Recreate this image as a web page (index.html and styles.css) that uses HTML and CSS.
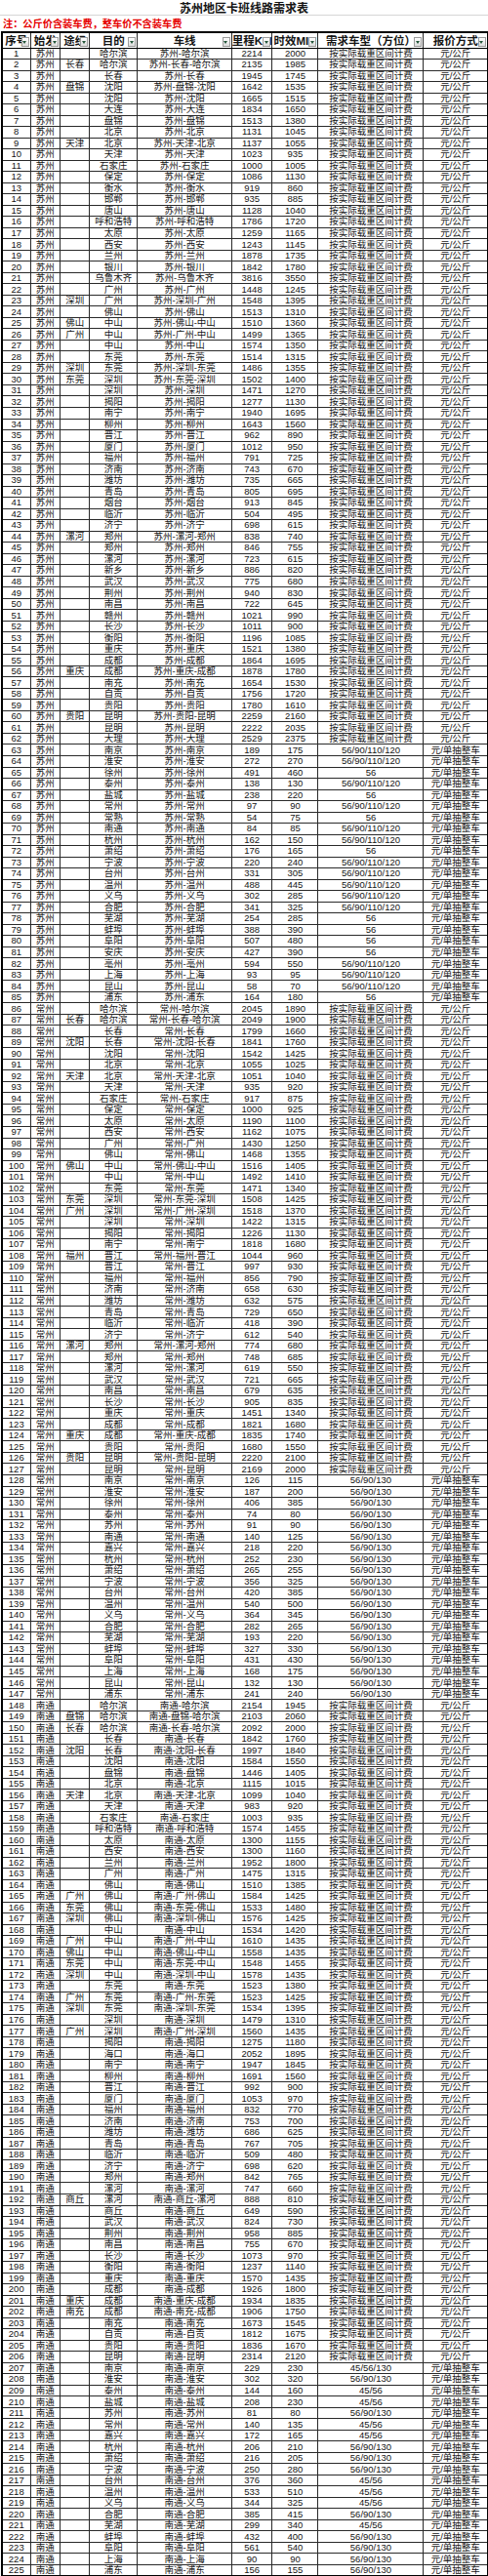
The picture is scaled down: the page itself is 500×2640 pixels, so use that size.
FILE: index.html
```html
<!DOCTYPE html>
<html lang="zh-CN">
<head>
<meta charset="utf-8">
<title>苏州地区卡班线路需求表</title>
<link rel="stylesheet" href="styles.css">
</head>
<body>
<div class="title">苏州地区卡班线路需求表</div>
<div class="note">注：公斤价含装车费，整车价不含装车费</div>
<table class="sheet">
<colgroup><col class="c1"><col class="c2"><col class="c3"><col class="c4"><col class="c5"><col class="c6"><col class="c7"><col class="c8"><col class="c9"></colgroup>
<thead>
<tr><th>序号<span class="fb"></span></th><th>始发<span class="fb"></span></th><th>途经<span class="fb"></span></th><th>目的<span class="fb"></span></th><th>车线<span class="fb"></span></th><th>里程KM<span class="fb"></span></th><th>时效MIN<span class="fb"></span></th><th>需求车型（方位）<span class="fb"></span></th><th>报价方式<span class="fb"></span></th></tr>
</thead>
<tbody>
<tr><td>1<td>苏州<td><td>哈尔滨<td>苏州-哈尔滨<td>2214<td>2000<td>按实际载重区间计费<td>元/公斤
<tr><td>2<td>苏州<td>长春<td>哈尔滨<td>苏州-长春-哈尔滨<td>2135<td>1985<td>按实际载重区间计费<td>元/公斤
<tr><td>3<td>苏州<td><td>长春<td>苏州-长春<td>1945<td>1745<td>按实际载重区间计费<td>元/公斤
<tr><td>4<td>苏州<td>盘锦<td>沈阳<td>苏州-盘锦-沈阳<td>1642<td>1535<td>按实际载重区间计费<td>元/公斤
<tr><td>5<td>苏州<td><td>沈阳<td>苏州-沈阳<td>1665<td>1515<td>按实际载重区间计费<td>元/公斤
<tr><td>6<td>苏州<td><td>大连<td>苏州-大连<td>1834<td>1650<td>按实际载重区间计费<td>元/公斤
<tr><td>7<td>苏州<td><td>盘锦<td>苏州-盘锦<td>1513<td>1380<td>按实际载重区间计费<td>元/公斤
<tr><td>8<td>苏州<td><td>北京<td>苏州-北京<td>1131<td>1045<td>按实际载重区间计费<td>元/公斤
<tr><td>9<td>苏州<td>天津<td>北京<td>苏州-天津-北京<td>1137<td>1055<td>按实际载重区间计费<td>元/公斤
<tr><td>10<td>苏州<td><td>天津<td>苏州-天津<td>1023<td>935<td>按实际载重区间计费<td>元/公斤
<tr><td>11<td>苏州<td><td>石家庄<td>苏州-石家庄<td>1000<td>1005<td>按实际载重区间计费<td>元/公斤
<tr><td>12<td>苏州<td><td>保定<td>苏州-保定<td>1086<td>1130<td>按实际载重区间计费<td>元/公斤
<tr><td>13<td>苏州<td><td>衡水<td>苏州-衡水<td>919<td>860<td>按实际载重区间计费<td>元/公斤
<tr><td>14<td>苏州<td><td>邯郸<td>苏州-邯郸<td>935<td>885<td>按实际载重区间计费<td>元/公斤
<tr><td>15<td>苏州<td><td>唐山<td>苏州-唐山<td>1128<td>1040<td>按实际载重区间计费<td>元/公斤
<tr><td>16<td>苏州<td><td>呼和浩特<td>苏州-呼和浩特<td>1786<td>1720<td>按实际载重区间计费<td>元/公斤
<tr><td>17<td>苏州<td><td>太原<td>苏州-太原<td>1259<td>1165<td>按实际载重区间计费<td>元/公斤
<tr><td>18<td>苏州<td><td>西安<td>苏州-西安<td>1243<td>1145<td>按实际载重区间计费<td>元/公斤
<tr><td>19<td>苏州<td><td>兰州<td>苏州-兰州<td>1878<td>1735<td>按实际载重区间计费<td>元/公斤
<tr><td>20<td>苏州<td><td>银川<td>苏州-银川<td>1842<td>1780<td>按实际载重区间计费<td>元/公斤
<tr><td>21<td>苏州<td><td>乌鲁木齐<td>苏州-乌鲁木齐<td>3816<td>3550<td>按实际载重区间计费<td>元/公斤
<tr><td>22<td>苏州<td><td>广州<td>苏州-广州<td>1448<td>1245<td>按实际载重区间计费<td>元/公斤
<tr><td>23<td>苏州<td>深圳<td>广州<td>苏州-深圳-广州<td>1548<td>1395<td>按实际载重区间计费<td>元/公斤
<tr><td>24<td>苏州<td><td>佛山<td>苏州-佛山<td>1513<td>1310<td>按实际载重区间计费<td>元/公斤
<tr><td>25<td>苏州<td>佛山<td>中山<td>苏州-佛山-中山<td>1510<td>1360<td>按实际载重区间计费<td>元/公斤
<tr><td>26<td>苏州<td>广州<td>中山<td>苏州-广州-中山<td>1499<td>1365<td>按实际载重区间计费<td>元/公斤
<tr><td>27<td>苏州<td><td>中山<td>苏州-中山<td>1574<td>1350<td>按实际载重区间计费<td>元/公斤
<tr><td>28<td>苏州<td><td>东莞<td>苏州-东莞<td>1514<td>1315<td>按实际载重区间计费<td>元/公斤
<tr><td>29<td>苏州<td>深圳<td>东莞<td>苏州-深圳-东莞<td>1486<td>1355<td>按实际载重区间计费<td>元/公斤
<tr><td>30<td>苏州<td>东莞<td>深圳<td>苏州-东莞-深圳<td>1502<td>1400<td>按实际载重区间计费<td>元/公斤
<tr><td>31<td>苏州<td><td>深圳<td>苏州-深圳<td>1471<td>1270<td>按实际载重区间计费<td>元/公斤
<tr><td>32<td>苏州<td><td>揭阳<td>苏州-揭阳<td>1277<td>1130<td>按实际载重区间计费<td>元/公斤
<tr><td>33<td>苏州<td><td>南宁<td>苏州-南宁<td>1940<td>1695<td>按实际载重区间计费<td>元/公斤
<tr><td>34<td>苏州<td><td>柳州<td>苏州-柳州<td>1643<td>1560<td>按实际载重区间计费<td>元/公斤
<tr><td>35<td>苏州<td><td>晋江<td>苏州-晋江<td>962<td>890<td>按实际载重区间计费<td>元/公斤
<tr><td>36<td>苏州<td><td>厦门<td>苏州-厦门<td>1012<td>950<td>按实际载重区间计费<td>元/公斤
<tr><td>37<td>苏州<td><td>福州<td>苏州-福州<td>791<td>725<td>按实际载重区间计费<td>元/公斤
<tr><td>38<td>苏州<td><td>济南<td>苏州-济南<td>743<td>670<td>按实际载重区间计费<td>元/公斤
<tr><td>39<td>苏州<td><td>潍坊<td>苏州-潍坊<td>735<td>665<td>按实际载重区间计费<td>元/公斤
<tr><td>40<td>苏州<td><td>青岛<td>苏州-青岛<td>805<td>695<td>按实际载重区间计费<td>元/公斤
<tr><td>41<td>苏州<td><td>烟台<td>苏州-烟台<td>913<td>845<td>按实际载重区间计费<td>元/公斤
<tr><td>42<td>苏州<td><td>临沂<td>苏州-临沂<td>504<td>495<td>按实际载重区间计费<td>元/公斤
<tr><td>43<td>苏州<td><td>济宁<td>苏州-济宁<td>698<td>615<td>按实际载重区间计费<td>元/公斤
<tr><td>44<td>苏州<td>漯河<td>郑州<td>苏州-漯河-郑州<td>838<td>740<td>按实际载重区间计费<td>元/公斤
<tr><td>45<td>苏州<td><td>郑州<td>苏州-郑州<td>846<td>755<td>按实际载重区间计费<td>元/公斤
<tr><td>46<td>苏州<td><td>漯河<td>苏州-漯河<td>723<td>615<td>按实际载重区间计费<td>元/公斤
<tr><td>47<td>苏州<td><td>新乡<td>苏州-新乡<td>886<td>820<td>按实际载重区间计费<td>元/公斤
<tr><td>48<td>苏州<td><td>武汉<td>苏州-武汉<td>775<td>680<td>按实际载重区间计费<td>元/公斤
<tr><td>49<td>苏州<td><td>荆州<td>苏州-荆州<td>940<td>830<td>按实际载重区间计费<td>元/公斤
<tr><td>50<td>苏州<td><td>南昌<td>苏州-南昌<td>722<td>645<td>按实际载重区间计费<td>元/公斤
<tr><td>51<td>苏州<td><td>赣州<td>苏州-赣州<td>1021<td>990<td>按实际载重区间计费<td>元/公斤
<tr><td>52<td>苏州<td><td>长沙<td>苏州-长沙<td>1011<td>900<td>按实际载重区间计费<td>元/公斤
<tr><td>53<td>苏州<td><td>衡阳<td>苏州-衡阳<td>1196<td>1085<td>按实际载重区间计费<td>元/公斤
<tr><td>54<td>苏州<td><td>重庆<td>苏州-重庆<td>1521<td>1380<td>按实际载重区间计费<td>元/公斤
<tr><td>55<td>苏州<td><td>成都<td>苏州-成都<td>1864<td>1695<td>按实际载重区间计费<td>元/公斤
<tr><td>56<td>苏州<td>重庆<td>成都<td>苏州-重庆-成都<td>1878<td>1780<td>按实际载重区间计费<td>元/公斤
<tr><td>57<td>苏州<td><td>南充<td>苏州-南充<td>1654<td>1530<td>按实际载重区间计费<td>元/公斤
<tr><td>58<td>苏州<td><td>自贡<td>苏州-自贡<td>1756<td>1720<td>按实际载重区间计费<td>元/公斤
<tr><td>59<td>苏州<td><td>贵阳<td>苏州-贵阳<td>1780<td>1610<td>按实际载重区间计费<td>元/公斤
<tr><td>60<td>苏州<td>贵阳<td>昆明<td>苏州-贵阳-昆明<td>2259<td>2160<td>按实际载重区间计费<td>元/公斤
<tr><td>61<td>苏州<td><td>昆明<td>苏州-昆明<td>2222<td>2035<td>按实际载重区间计费<td>元/公斤
<tr><td>62<td>苏州<td><td>大理<td>苏州-大理<td>2529<td>2375<td>按实际载重区间计费<td>元/公斤
<tr><td>63<td>苏州<td><td>南京<td>苏州-南京<td>189<td>175<td>56/90/110/120<td>元/单抽整车
<tr><td>64<td>苏州<td><td>淮安<td>苏州-淮安<td>272<td>270<td>56/90/110/120<td>元/单抽整车
<tr><td>65<td>苏州<td><td>徐州<td>苏州-徐州<td>491<td>460<td>56<td>元/单抽整车
<tr><td>66<td>苏州<td><td>泰州<td>苏州-泰州<td>138<td>130<td>56/90/110/120<td>元/单抽整车
<tr><td>67<td>苏州<td><td>盐城<td>苏州-盐城<td>238<td>220<td>56<td>元/单抽整车
<tr><td>68<td>苏州<td><td>常州<td>苏州-常州<td>97<td>90<td>56/90/110/120<td>元/单抽整车
<tr><td>69<td>苏州<td><td>常熟<td>苏州-常熟<td>54<td>75<td>56<td>元/单抽整车
<tr><td>70<td>苏州<td><td>南通<td>苏州-南通<td>84<td>85<td>56/90/110/120<td>元/单抽整车
<tr><td>71<td>苏州<td><td>杭州<td>苏州-杭州<td>162<td>150<td>56/90/110/120<td>元/单抽整车
<tr><td>72<td>苏州<td><td>萧绍<td>苏州-萧绍<td>176<td>165<td>56<td>元/单抽整车
<tr><td>73<td>苏州<td><td>宁波<td>苏州-宁波<td>220<td>240<td>56/90/110/120<td>元/单抽整车
<tr><td>74<td>苏州<td><td>台州<td>苏州-台州<td>331<td>305<td>56/90/110/120<td>元/单抽整车
<tr><td>75<td>苏州<td><td>温州<td>苏州-温州<td>488<td>445<td>56/90/110/120<td>元/单抽整车
<tr><td>76<td>苏州<td><td>义乌<td>苏州-义乌<td>302<td>285<td>56/90/110/120<td>元/单抽整车
<tr><td>77<td>苏州<td><td>合肥<td>苏州-合肥<td>341<td>325<td>56/90/110/120<td>元/单抽整车
<tr><td>78<td>苏州<td><td>芜湖<td>苏州-芜湖<td>254<td>285<td>56<td>元/单抽整车
<tr><td>79<td>苏州<td><td>蚌埠<td>苏州-蚌埠<td>388<td>390<td>56<td>元/单抽整车
<tr><td>80<td>苏州<td><td>阜阳<td>苏州-阜阳<td>507<td>480<td>56<td>元/单抽整车
<tr><td>81<td>苏州<td><td>安庆<td>苏州-安庆<td>427<td>390<td>56<td>元/单抽整车
<tr><td>82<td>苏州<td><td>亳州<td>苏州-亳州<td>594<td>550<td>56/90/110/120<td>元/单抽整车
<tr><td>83<td>苏州<td><td>上海<td>苏州-上海<td>93<td>95<td>56/90/110/120<td>元/单抽整车
<tr><td>84<td>苏州<td><td>昆山<td>苏州-昆山<td>58<td>70<td>56/90/110/120<td>元/单抽整车
<tr><td>85<td>苏州<td><td>浦东<td>苏州-浦东<td>164<td>180<td>56<td>元/单抽整车
<tr><td>86<td>常州<td><td>哈尔滨<td>常州-哈尔滨<td>2045<td>1890<td>按实际载重区间计费<td>元/公斤
<tr><td>87<td>常州<td>长春<td>哈尔滨<td>常州-长春-哈尔滨<td>2049<td>1900<td>按实际载重区间计费<td>元/公斤
<tr><td>88<td>常州<td><td>长春<td>常州-长春<td>1799<td>1660<td>按实际载重区间计费<td>元/公斤
<tr><td>89<td>常州<td>沈阳<td>长春<td>常州-沈阳-长春<td>1841<td>1760<td>按实际载重区间计费<td>元/公斤
<tr><td>90<td>常州<td><td>沈阳<td>常州-沈阳<td>1542<td>1425<td>按实际载重区间计费<td>元/公斤
<tr><td>91<td>常州<td><td>北京<td>常州-北京<td>1055<td>1025<td>按实际载重区间计费<td>元/公斤
<tr><td>92<td>常州<td>天津<td>北京<td>常州-天津-北京<td>1051<td>1040<td>按实际载重区间计费<td>元/公斤
<tr><td>93<td>常州<td><td>天津<td>常州-天津<td>935<td>920<td>按实际载重区间计费<td>元/公斤
<tr><td>94<td>常州<td><td>石家庄<td>常州-石家庄<td>917<td>875<td>按实际载重区间计费<td>元/公斤
<tr><td>95<td>常州<td><td>保定<td>常州-保定<td>1000<td>925<td>按实际载重区间计费<td>元/公斤
<tr><td>96<td>常州<td><td>太原<td>常州-太原<td>1190<td>1100<td>按实际载重区间计费<td>元/公斤
<tr><td>97<td>常州<td><td>西安<td>常州-西安<td>1162<td>1075<td>按实际载重区间计费<td>元/公斤
<tr><td>98<td>常州<td><td>广州<td>常州-广州<td>1430<td>1250<td>按实际载重区间计费<td>元/公斤
<tr><td>99<td>常州<td><td>佛山<td>常州-佛山<td>1468<td>1355<td>按实际载重区间计费<td>元/公斤
<tr><td>100<td>常州<td>佛山<td>中山<td>常州-佛山-中山<td>1516<td>1405<td>按实际载重区间计费<td>元/公斤
<tr><td>101<td>常州<td><td>中山<td>常州-中山<td>1492<td>1410<td>按实际载重区间计费<td>元/公斤
<tr><td>102<td>常州<td><td>东莞<td>常州-东莞<td>1471<td>1340<td>按实际载重区间计费<td>元/公斤
<tr><td>103<td>常州<td>东莞<td>深圳<td>常州-东莞-深圳<td>1508<td>1425<td>按实际载重区间计费<td>元/公斤
<tr><td>104<td>常州<td>广州<td>深圳<td>常州-广州-深圳<td>1518<td>1370<td>按实际载重区间计费<td>元/公斤
<tr><td>105<td>常州<td><td>深圳<td>常州-深圳<td>1422<td>1315<td>按实际载重区间计费<td>元/公斤
<tr><td>106<td>常州<td><td>揭阳<td>常州-揭阳<td>1226<td>1130<td>按实际载重区间计费<td>元/公斤
<tr><td>107<td>常州<td><td>南宁<td>常州-南宁<td>1818<td>1680<td>按实际载重区间计费<td>元/公斤
<tr><td>108<td>常州<td>福州<td>晋江<td>常州-福州-晋江<td>1044<td>960<td>按实际载重区间计费<td>元/公斤
<tr><td>109<td>常州<td><td>晋江<td>常州-晋江<td>997<td>930<td>按实际载重区间计费<td>元/公斤
<tr><td>110<td>常州<td><td>福州<td>常州-福州<td>856<td>790<td>按实际载重区间计费<td>元/公斤
<tr><td>111<td>常州<td><td>济南<td>常州-济南<td>658<td>630<td>按实际载重区间计费<td>元/公斤
<tr><td>112<td>常州<td><td>潍坊<td>常州-潍坊<td>632<td>575<td>按实际载重区间计费<td>元/公斤
<tr><td>113<td>常州<td><td>青岛<td>常州-青岛<td>729<td>650<td>按实际载重区间计费<td>元/公斤
<tr><td>114<td>常州<td><td>临沂<td>常州-临沂<td>418<td>390<td>按实际载重区间计费<td>元/公斤
<tr><td>115<td>常州<td><td>济宁<td>常州-济宁<td>612<td>540<td>按实际载重区间计费<td>元/公斤
<tr><td>116<td>常州<td>漯河<td>郑州<td>常州-漯河-郑州<td>774<td>680<td>按实际载重区间计费<td>元/公斤
<tr><td>117<td>常州<td><td>郑州<td>常州-郑州<td>748<td>685<td>按实际载重区间计费<td>元/公斤
<tr><td>118<td>常州<td><td>漯河<td>常州-漯河<td>619<td>550<td>按实际载重区间计费<td>元/公斤
<tr><td>119<td>常州<td><td>武汉<td>常州-武汉<td>721<td>665<td>按实际载重区间计费<td>元/公斤
<tr><td>120<td>常州<td><td>南昌<td>常州-南昌<td>679<td>635<td>按实际载重区间计费<td>元/公斤
<tr><td>121<td>常州<td><td>长沙<td>常州-长沙<td>905<td>835<td>按实际载重区间计费<td>元/公斤
<tr><td>122<td>常州<td><td>重庆<td>常州-重庆<td>1451<td>1340<td>按实际载重区间计费<td>元/公斤
<tr><td>123<td>常州<td><td>成都<td>常州-成都<td>1821<td>1680<td>按实际载重区间计费<td>元/公斤
<tr><td>124<td>常州<td>重庆<td>成都<td>常州-重庆-成都<td>1835<td>1740<td>按实际载重区间计费<td>元/公斤
<tr><td>125<td>常州<td><td>贵阳<td>常州-贵阳<td>1680<td>1550<td>按实际载重区间计费<td>元/公斤
<tr><td>126<td>常州<td>贵阳<td>昆明<td>常州-贵阳-昆明<td>2220<td>2100<td>按实际载重区间计费<td>元/公斤
<tr><td>127<td>常州<td><td>昆明<td>常州-昆明<td>2169<td>2000<td>按实际载重区间计费<td>元/公斤
<tr><td>128<td>常州<td><td>南京<td>常州-南京<td>126<td>115<td>56/90/130<td>元/单抽整车
<tr><td>129<td>常州<td><td>淮安<td>常州-淮安<td>187<td>200<td>56/90/130<td>元/单抽整车
<tr><td>130<td>常州<td><td>徐州<td>常州-徐州<td>406<td>385<td>56/90/130<td>元/单抽整车
<tr><td>131<td>常州<td><td>泰州<td>常州-泰州<td>74<td>80<td>56/90/130<td>元/单抽整车
<tr><td>132<td>常州<td><td>苏州<td>常州-苏州<td>91<td>90<td>56/90/130<td>元/单抽整车
<tr><td>133<td>常州<td><td>南通<td>常州-南通<td>140<td>125<td>56/90/130<td>元/单抽整车
<tr><td>134<td>常州<td><td>嘉兴<td>常州-嘉兴<td>218<td>220<td>56/90/130<td>元/单抽整车
<tr><td>135<td>常州<td><td>杭州<td>常州-杭州<td>252<td>230<td>56/90/130<td>元/单抽整车
<tr><td>136<td>常州<td><td>萧绍<td>常州-萧绍<td>265<td>255<td>56/90/130<td>元/单抽整车
<tr><td>137<td>常州<td><td>宁波<td>常州-宁波<td>356<td>325<td>56/90/130<td>元/单抽整车
<tr><td>138<td>常州<td><td>台州<td>常州-台州<td>420<td>385<td>56/90/130<td>元/单抽整车
<tr><td>139<td>常州<td><td>温州<td>常州-温州<td>540<td>500<td>56/90/130<td>元/单抽整车
<tr><td>140<td>常州<td><td>义乌<td>常州-义乌<td>364<td>345<td>56/90/130<td>元/单抽整车
<tr><td>141<td>常州<td><td>合肥<td>常州-合肥<td>282<td>265<td>56/90/130<td>元/单抽整车
<tr><td>142<td>常州<td><td>芜湖<td>常州-芜湖<td>193<td>220<td>56/90/130<td>元/单抽整车
<tr><td>143<td>常州<td><td>蚌埠<td>常州-蚌埠<td>327<td>330<td>56/90/130<td>元/单抽整车
<tr><td>144<td>常州<td><td>阜阳<td>常州-阜阳<td>431<td>430<td>56/90/130<td>元/单抽整车
<tr><td>145<td>常州<td><td>上海<td>常州-上海<td>168<td>175<td>56/90/130<td>元/单抽整车
<tr><td>146<td>常州<td><td>昆山<td>常州-昆山<td>132<td>130<td>56/90/130<td>元/单抽整车
<tr><td>147<td>常州<td><td>浦东<td>常州-浦东<td>241<td>240<td>56/90/130<td>元/单抽整车
<tr><td>148<td>南通<td><td>哈尔滨<td>南通-哈尔滨<td>2154<td>1945<td>按实际载重区间计费<td>元/公斤
<tr><td>149<td>南通<td>盘锦<td>哈尔滨<td>南通-盘锦-哈尔滨<td>2103<td>2060<td>按实际载重区间计费<td>元/公斤
<tr><td>150<td>南通<td>长春<td>哈尔滨<td>南通-长春-哈尔滨<td>2092<td>2000<td>按实际载重区间计费<td>元/公斤
<tr><td>151<td>南通<td><td>长春<td>南通-长春<td>1842<td>1760<td>按实际载重区间计费<td>元/公斤
<tr><td>152<td>南通<td>沈阳<td>长春<td>南通-沈阳-长春<td>1997<td>1840<td>按实际载重区间计费<td>元/公斤
<tr><td>153<td>南通<td><td>沈阳<td>南通-沈阳<td>1584<td>1550<td>按实际载重区间计费<td>元/公斤
<tr><td>154<td>南通<td><td>盘锦<td>南通-盘锦<td>1446<td>1405<td>按实际载重区间计费<td>元/公斤
<tr><td>155<td>南通<td><td>北京<td>南通-北京<td>1115<td>1015<td>按实际载重区间计费<td>元/公斤
<tr><td>156<td>南通<td>天津<td>北京<td>南通-天津-北京<td>1099<td>1040<td>按实际载重区间计费<td>元/公斤
<tr><td>157<td>南通<td><td>天津<td>南通-天津<td>983<td>920<td>按实际载重区间计费<td>元/公斤
<tr><td>158<td>南通<td><td>石家庄<td>南通-石家庄<td>1003<td>935<td>按实际载重区间计费<td>元/公斤
<tr><td>159<td>南通<td><td>呼和浩特<td>南通-呼和浩特<td>1574<td>1455<td>按实际载重区间计费<td>元/公斤
<tr><td>160<td>南通<td><td>太原<td>南通-太原<td>1300<td>1155<td>按实际载重区间计费<td>元/公斤
<tr><td>161<td>南通<td><td>西安<td>南通-西安<td>1300<td>1160<td>按实际载重区间计费<td>元/公斤
<tr><td>162<td>南通<td><td>兰州<td>南通-兰州<td>1952<td>1800<td>按实际载重区间计费<td>元/公斤
<tr><td>163<td>南通<td><td>广州<td>南通-广州<td>1475<td>1315<td>按实际载重区间计费<td>元/公斤
<tr><td>164<td>南通<td><td>佛山<td>南通-佛山<td>1510<td>1385<td>按实际载重区间计费<td>元/公斤
<tr><td>165<td>南通<td>广州<td>佛山<td>南通-广州-佛山<td>1584<td>1425<td>按实际载重区间计费<td>元/公斤
<tr><td>166<td>南通<td>东莞<td>佛山<td>南通-东莞-佛山<td>1533<td>1480<td>按实际载重区间计费<td>元/公斤
<tr><td>167<td>南通<td>深圳<td>佛山<td>南通-深圳-佛山<td>1576<td>1425<td>按实际载重区间计费<td>元/公斤
<tr><td>168<td>南通<td><td>中山<td>南通-中山<td>1534<td>1420<td>按实际载重区间计费<td>元/公斤
<tr><td>169<td>南通<td>广州<td>中山<td>南通-广州-中山<td>1610<td>1435<td>按实际载重区间计费<td>元/公斤
<tr><td>170<td>南通<td>佛山<td>中山<td>南通-佛山-中山<td>1558<td>1435<td>按实际载重区间计费<td>元/公斤
<tr><td>171<td>南通<td>东莞<td>中山<td>南通-东莞-中山<td>1548<td>1455<td>按实际载重区间计费<td>元/公斤
<tr><td>172<td>南通<td>深圳<td>中山<td>南通-深圳-中山<td>1578<td>1435<td>按实际载重区间计费<td>元/公斤
<tr><td>173<td>南通<td><td>东莞<td>南通-东莞<td>1523<td>1380<td>按实际载重区间计费<td>元/公斤
<tr><td>174<td>南通<td>广州<td>东莞<td>南通-广州-东莞<td>1523<td>1425<td>按实际载重区间计费<td>元/公斤
<tr><td>175<td>南通<td>深圳<td>东莞<td>南通-深圳-东莞<td>1534<td>1395<td>按实际载重区间计费<td>元/公斤
<tr><td>176<td>南通<td><td>深圳<td>南通-深圳<td>1479<td>1310<td>按实际载重区间计费<td>元/公斤
<tr><td>177<td>南通<td>广州<td>深圳<td>南通-广州-深圳<td>1560<td>1435<td>按实际载重区间计费<td>元/公斤
<tr><td>178<td>南通<td><td>揭阳<td>南通-揭阳<td>1275<td>1180<td>按实际载重区间计费<td>元/公斤
<tr><td>179<td>南通<td><td>海口<td>南通-海口<td>2052<td>1895<td>按实际载重区间计费<td>元/公斤
<tr><td>180<td>南通<td><td>南宁<td>南通-南宁<td>1947<td>1845<td>按实际载重区间计费<td>元/公斤
<tr><td>181<td>南通<td><td>柳州<td>南通-柳州<td>1691<td>1560<td>按实际载重区间计费<td>元/公斤
<tr><td>182<td>南通<td><td>晋江<td>南通-晋江<td>992<td>900<td>按实际载重区间计费<td>元/公斤
<tr><td>183<td>南通<td><td>厦门<td>南通-厦门<td>1053<td>970<td>按实际载重区间计费<td>元/公斤
<tr><td>184<td>南通<td><td>福州<td>南通-福州<td>832<td>770<td>按实际载重区间计费<td>元/公斤
<tr><td>185<td>南通<td><td>济南<td>南通-济南<td>753<td>700<td>按实际载重区间计费<td>元/公斤
<tr><td>186<td>南通<td><td>潍坊<td>南通-潍坊<td>686<td>625<td>按实际载重区间计费<td>元/公斤
<tr><td>187<td>南通<td><td>青岛<td>南通-青岛<td>767<td>705<td>按实际载重区间计费<td>元/公斤
<tr><td>188<td>南通<td><td>临沂<td>南通-临沂<td>509<td>480<td>按实际载重区间计费<td>元/公斤
<tr><td>189<td>南通<td><td>济宁<td>南通-济宁<td>698<td>620<td>按实际载重区间计费<td>元/公斤
<tr><td>190<td>南通<td><td>郑州<td>南通-郑州<td>842<td>765<td>按实际载重区间计费<td>元/公斤
<tr><td>191<td>南通<td><td>漯河<td>南通-漯河<td>747<td>660<td>按实际载重区间计费<td>元/公斤
<tr><td>192<td>南通<td>商丘<td>漯河<td>南通-商丘-漯河<td>888<td>810<td>按实际载重区间计费<td>元/公斤
<tr><td>193<td>南通<td><td>商丘<td>南通-商丘<td>649<td>590<td>按实际载重区间计费<td>元/公斤
<tr><td>194<td>南通<td><td>武汉<td>南通-武汉<td>824<td>730<td>按实际载重区间计费<td>元/公斤
<tr><td>195<td>南通<td><td>荆州<td>南通-荆州<td>958<td>885<td>按实际载重区间计费<td>元/公斤
<tr><td>196<td>南通<td><td>南昌<td>南通-南昌<td>755<td>670<td>按实际载重区间计费<td>元/公斤
<tr><td>197<td>南通<td><td>长沙<td>南通-长沙<td>1073<td>970<td>按实际载重区间计费<td>元/公斤
<tr><td>198<td>南通<td><td>衡阳<td>南通-衡阳<td>1237<td>1140<td>按实际载重区间计费<td>元/公斤
<tr><td>199<td>南通<td><td>重庆<td>南通-重庆<td>1570<td>1435<td>按实际载重区间计费<td>元/公斤
<tr><td>200<td>南通<td><td>成都<td>南通-成都<td>1926<td>1800<td>按实际载重区间计费<td>元/公斤
<tr><td>201<td>南通<td>重庆<td>成都<td>南通-重庆-成都<td>1934<td>1835<td>按实际载重区间计费<td>元/公斤
<tr><td>202<td>南通<td>南充<td>成都<td>南通-南充-成都<td>1906<td>1750<td>按实际载重区间计费<td>元/公斤
<tr><td>203<td>南通<td><td>南充<td>南通-南充<td>1673<td>1545<td>按实际载重区间计费<td>元/公斤
<tr><td>204<td>南通<td><td>自贡<td>南通-自贡<td>1812<td>1675<td>按实际载重区间计费<td>元/公斤
<tr><td>205<td>南通<td><td>贵阳<td>南通-贵阳<td>1836<td>1670<td>按实际载重区间计费<td>元/公斤
<tr><td>206<td>南通<td><td>昆明<td>南通-昆明<td>2314<td>2120<td>按实际载重区间计费<td>元/公斤
<tr><td>207<td>南通<td><td>南京<td>南通-南京<td>229<td>230<td>45/56/130<td>元/单抽整车
<tr><td>208<td>南通<td><td>淮安<td>南通-淮安<td>302<td>320<td>56/90/130<td>元/单抽整车
<tr><td>209<td>南通<td><td>泰州<td>南通-泰州<td>144<td>160<td>45/56<td>元/单抽整车
<tr><td>210<td>南通<td><td>盐城<td>南通-盐城<td>208<td>230<td>45/56<td>元/单抽整车
<tr><td>211<td>南通<td><td>苏州<td>南通-苏州<td>81<td>80<td>56/90/130<td>元/单抽整车
<tr><td>212<td>南通<td><td>常州<td>南通-常州<td>140<td>135<td>45/56<td>元/单抽整车
<tr><td>213<td>南通<td><td>嘉兴<td>南通-嘉兴<td>172<td>165<td>45/56<td>元/单抽整车
<tr><td>214<td>南通<td><td>杭州<td>南通-杭州<td>206<td>210<td>56/90/130<td>元/单抽整车
<tr><td>215<td>南通<td><td>萧绍<td>南通-萧绍<td>216<td>205<td>56/90/130<td>元/单抽整车
<tr><td>216<td>南通<td><td>宁波<td>南通-宁波<td>250<td>280<td>56/90/130<td>元/单抽整车
<tr><td>217<td>南通<td><td>台州<td>南通-台州<td>376<td>360<td>45/56<td>元/单抽整车
<tr><td>218<td>南通<td><td>温州<td>南通-温州<td>533<td>510<td>45/56<td>元/单抽整车
<tr><td>219<td>南通<td><td>义乌<td>南通-义乌<td>344<td>325<td>45/56<td>元/单抽整车
<tr><td>220<td>南通<td><td>合肥<td>南通-合肥<td>385<td>415<td>56/90/130<td>元/单抽整车
<tr><td>221<td>南通<td><td>芜湖<td>南通-芜湖<td>299<td>340<td>45/56<td>元/单抽整车
<tr><td>222<td>南通<td><td>蚌埠<td>南通-蚌埠<td>432<td>400<td>56/90/130<td>元/单抽整车
<tr><td>223<td>南通<td><td>阜阳<td>南通-阜阳<td>561<td>540<td>56/90/130<td>元/单抽整车
<tr><td>224<td>南通<td><td>上海<td>南通-上海<td>90<td>90<td>56/90/130<td>元/单抽整车
<tr><td>225<td>南通<td><td>浦东<td>南通-浦东<td>156<td>155<td>56/90/130<td>元/单抽整车
</tbody>
</table>
</body>
</html>
```
FILE: styles.css
```css
* { box-sizing: border-box; }
html, body { margin: 0; padding: 0; background: #fff; }
body {
  width: 500px;
  font-family: "Liberation Sans", "Noto Sans CJK SC", sans-serif;
  color: #141414;
}
.title {
  height: 16px;
  border-bottom: 1px solid #d6d6d6;
  text-align: center;
  font-family: "Noto Sans CJK SC", sans-serif;
  font-weight: 700;
  font-size: 12px;
  line-height: 16px;
}
.note {
  height: 15.5px;
  padding-left: 3px;
  color: #e60000;
  font-family: "Noto Sans CJK SC", sans-serif;
  font-weight: 700;
  font-size: 10.2px;
  line-height: 15px;
  white-space: nowrap;
}
.sheet {
  margin-left: 1px;
  width: 498px;
  border-collapse: collapse;
  table-layout: fixed;
  border: 2px solid #000;
}
.c1 { width: 29px; }
.c2 { width: 30.7px; }
.c3 { width: 30px; }
.c4 { width: 49.3px; }
.c5 { width: 96.3px; }
.c6 { width: 41.7px; }
.c7 { width: 47px; }
.c8 { width: 108px; }
.c9 { width: 66px; }
.sheet th,
.sheet td {
  border: 1px solid #2a2a2a;
  padding: 0;
  text-align: center;
  white-space: nowrap;
  overflow: hidden;
}
.sheet th {
  position: relative;
  height: 16.5px;
  font-weight: 700;
  font-size: 11.5px;
  line-height: 14px;
  padding-top: 1px;
  border-bottom-color: #000;
}
.fb {
  position: absolute;
  right: 1px;
  top: 4px;
  width: 8px;
  height: 10px;
  border: 1px solid #9c9c9c;
  background: linear-gradient(#ffffff, #dcdcdc);
}
.fb::after {
  content: "";
  position: absolute;
  left: 0.5px;
  top: 3px;
  border-left: 2.5px solid transparent;
  border-right: 2.5px solid transparent;
  border-top: 3px solid #24553a;
}
.sheet tbody tr { height: 11.52px; }
.sheet td {
  font-size: 9.5px;
  line-height: 10px;
}
```
